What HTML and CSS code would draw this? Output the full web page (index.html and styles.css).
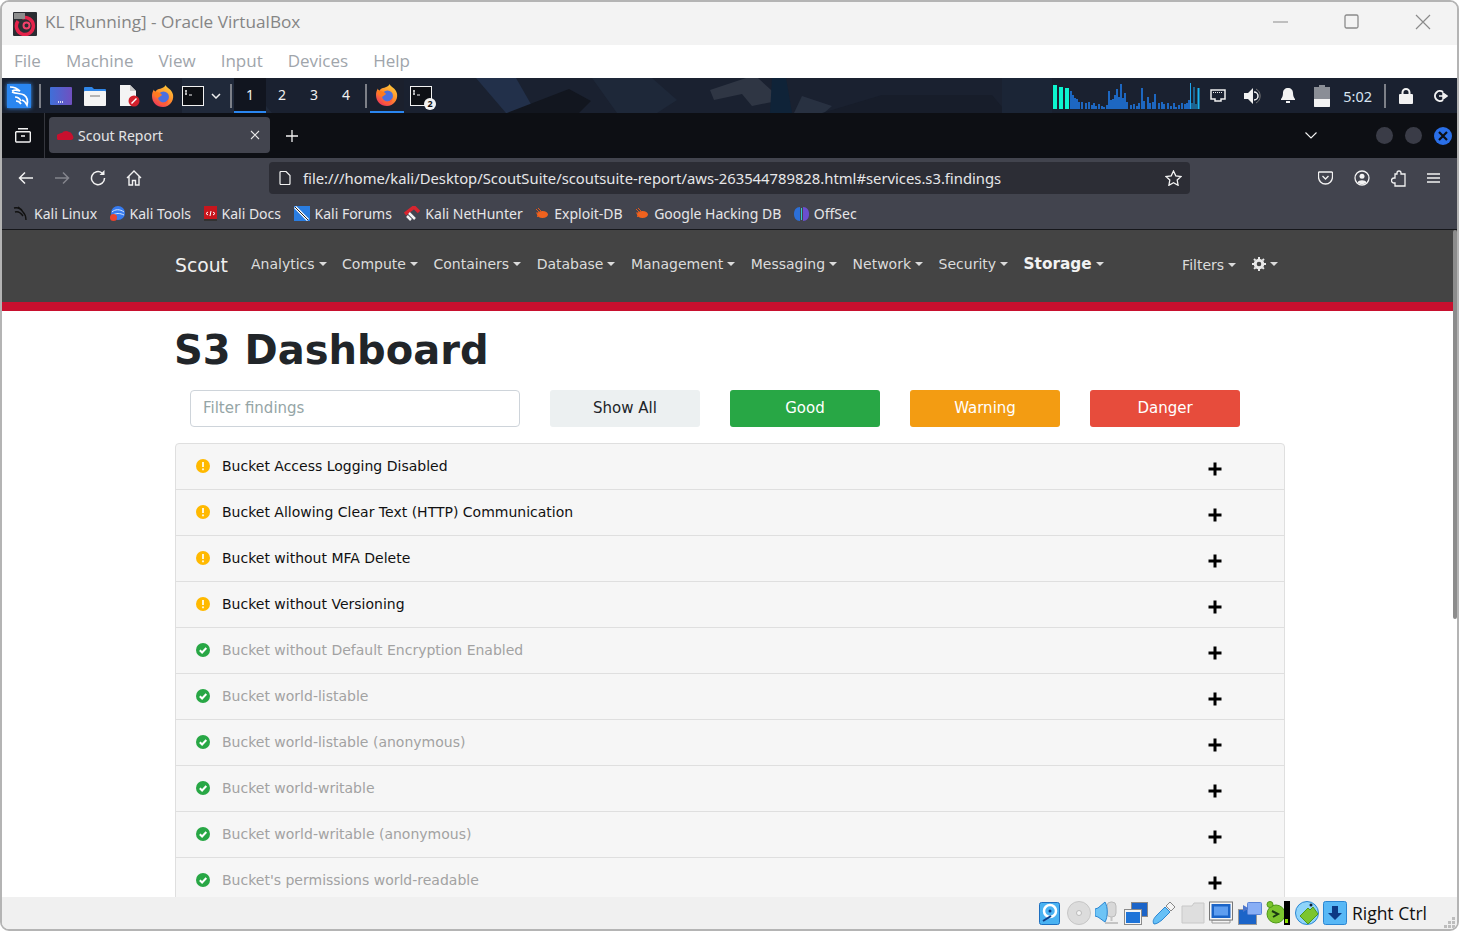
FILE: index.html
```html
<!DOCTYPE html>
<html lang="en">

<head>
    <meta charset="UTF-8">
    <meta name="viewport" content="width=device-width, initial-scale=1.0">
    <title>KL [Running] - Oracle VirtualBox</title>
    <link rel="stylesheet" href="styles.css">
</head>

<body>
    <svg class="defs" width="0" height="0">
        <defs>
            <linearGradient id="foxBody" x1="0.8" y1="0" x2="0.2" y2="1">
                <stop offset="0" stop-color="#ffcf3a"/>
                <stop offset="0.5" stop-color="#ff8a2b"/>
                <stop offset="1" stop-color="#ee2f5c"/>
            </linearGradient>
            <symbol id="firefox" viewBox="0 0 24 24">
                <path d="M15 0c0 3 7 4 8 11 1 7-4 13-11 13S0 19 0 12c0-3 1-5 2-7 0 1 1 2 2 2 1-2 3-3 5-3 3-1 5-2 6-4z" fill="url(#foxBody)"/>
                <circle cx="12.500" cy="13" r="6" fill="#4a6fe0"/>
                <path d="M1 8c4-1 8 0 10 3l-4 3C5 14 2 12 1 8z" fill="#ff7a1f"/>
                <path d="M7 19c4 2 9 0 11-4 0 4-3 7-7 7-2 0-3-1-4-3z" fill="#ff5a36"/>
            </symbol>
            <symbol id="term" viewBox="0 0 22 20">
                <rect x="0.500" y="0.500" width="21" height="19" fill="#0d0f14" stroke="#f2f2f2"/>
                <path d="M4 4v5M3 5h2M3 8h2M7 9h3" stroke="#f2f2f2" fill="none"/>
            </symbol>
            <symbol id="bug" viewBox="0 0 14 12">
                <path d="M1 1l3 3M3 0l3 3M1 5h2M2 9l2-2" stroke="#e0591c" fill="none"/>
                <ellipse cx="7.500" cy="6.500" rx="5.500" ry="3.500" fill="#f0621e"/>
            </symbol>
            <symbol id="warn" viewBox="0 0 14 14">
                <circle cx="7" cy="7" r="7" fill="#ffb900"/>
                <path d="M7 3v5" stroke="#fff6d8" stroke-width="2"/>
                <circle cx="7" cy="10.300" r="1.100" fill="#fff6d8"/>
            </symbol>
            <symbol id="ok" viewBox="0 0 14 14">
                <circle cx="7" cy="7" r="7" fill="#28a745"/>
                <path d="M3.800 7.200l2.300 2.300 4.200-4.500" stroke="#fff" stroke-width="2" fill="none"/>
            </symbol>
            <symbol id="plus" viewBox="0 0 14 14">
                <path d="M7 .5v13M.5 7h13" stroke="#000" stroke-width="3"/>
            </symbol>
        </defs>
    </svg>

    <div class="window">
        <!-- VirtualBox title bar and menu -->
        <div class="titlebar">
            <svg class="vbox-logo" width="24" height="24" viewBox="0 0 24 24">
                <rect width="24" height="24" rx="1" fill="#2b2d33"/>
                <path d="M9 6a8.500 8.500 0 1 1-4 3" stroke="#e5234b" stroke-width="3.500" fill="none"/>
                <circle cx="13.500" cy="13.500" r="3" fill="none" stroke="#f2416a" stroke-width="2"/>
                <rect x="1" y="1" width="11" height="6" fill="#8d8d8d"/>
            </svg>
            <span class="title-text">KL [Running] - Oracle VirtualBox</span>
            <div class="win-btns">
                <svg width="16" height="16" viewBox="0 0 16 16"><path d="M0 8h15" stroke="#8b8b8b"/></svg>
                <svg width="16" height="16" viewBox="0 0 16 16"><rect x="1" y="1" width="13" height="13" rx="1.500" fill="none" stroke="#8b8b8b" stroke-width="1.300"/></svg>
                <svg width="16" height="16" viewBox="0 0 16 16"><path d="M1 1l14 14M15 1L1 15" stroke="#8b8b8b" stroke-width="1.200"/></svg>
            </div>
        </div>
        <div class="menubar">
            <span>File</span><span>Machine</span><span>View</span><span>Input</span><span>Devices</span><span>Help</span>
        </div>

        <!-- Kali panel -->
        <div class="panel">
            <svg class="panel-wall" width="1455" height="35" viewBox="0 0 1455 35">
                <path d="M180 0h60l30 35h-90z" fill="#20293a"/>
                <path d="M474 0h40l20 35h-30z" fill="#22304a"/>
                <path d="M505 35l62-24 22 12-12 12z" fill="#12161f"/>
                <path d="M590 0h60l25 22-20 13h-40z" fill="#1e2839"/>
                <path d="M708 12l36-12h12l24 22-30 6-10-12-28 6z" fill="#2f3644"/>
                <path d="M770 0h14l6 35h-22z" fill="#0f2338"/>
                <path d="M800 18l30 10-8 7h-30z" fill="#283141"/>
                <path d="M820 35l60-18h110l15 18z" fill="#171d2a"/>
                <path d="M1000 0h50v35h-50z" fill="#1b2536"/>
            </svg>
            <div class="panel-left">
                <div class="kali-btn">
                    <svg width="24" height="24" viewBox="0 0 24 24"><path d="M3 3c4 0 7 1 10 4-3-1-6-1-8 0M5 8c4 2 9 1 12 3 3 2 4 6 3 10-1-2-2-4-5-5M8 13c3 0 5 2 6 4M9 17c2 0 4 1 5 3" stroke="#fff" stroke-width="1.700" fill="none"/></svg>
                </div>
                <i class="panel-sep sep-a"></i>
                <svg class="p-desktop" width="22" height="18" viewBox="0 0 22 18"><defs><linearGradient id="deskFill"><stop offset="0" stop-color="#3f6fd8"/><stop offset="1" stop-color="#7050c0"/></linearGradient></defs><rect width="22" height="18" rx="1" fill="url(#deskFill)"/><path d="M8 15h6" stroke="#fff" stroke-dasharray="1 1" stroke-width="1.500"/></svg>
                <svg class="p-folder" width="22" height="20" viewBox="0 0 22 20"><path d="M0 2a1 1 0 0 1 1-1h7l2 2h11a1 1 0 0 1 1 1v3H0z" fill="#2f86e8"/><rect y="5" width="22" height="15" rx="1" fill="#f4f4f4"/><rect x="6" y="9" width="10" height="2" fill="#b5b5b5"/></svg>
                <svg class="p-file" width="21" height="22" viewBox="0 0 21 22"><path d="M1 0h10l6 6v15H1z" fill="#f4f4f4"/><path d="M11 0l6 6h-6z" fill="#c9c9c9"/><circle cx="15" cy="16" r="5.500" fill="#d3202c"/><path d="M12.500 18.500l5-5" stroke="#fff" stroke-width="1.500"/></svg>
                <svg class="p-fox" width="22" height="24"><use href="#firefox"/></svg>
                <svg class="p-term" width="22" height="20"><use href="#term"/></svg>
                <svg class="p-chev" width="10" height="6" viewBox="0 0 10 6"><path d="M1 1l4 4 4-4" stroke="#eee" stroke-width="1.500" fill="none"/></svg>
                <i class="panel-sep sep-b"></i>
                <div class="workspaces">
                    <span class="ws active">1</span><span class="ws">2</span><span class="ws">3</span><span class="ws">4</span>
                </div>
                <i class="panel-sep sep-c"></i>
                <div class="task active"><svg width="22" height="24"><use href="#firefox"/></svg></div>
                <div class="task-term">
                    <svg width="22" height="20"><use href="#term"/></svg>
                    <b class="badge">2</b>
                </div>
            </div>
            <div class="panel-right">
                <svg class="spectrum" width="147" height="26" viewBox="0 0 147 26">
                    <path d="M2 2v24M8 4v22M14 5v21" stroke="#0df5cf" stroke-width="4"/>
                    <path d="M18 26v-18M20 26v-14M22 26v-11M24 26v-10M26 26v-7M29 26v-7M33 26v-6M36 26v-7M39 26v-4M41 26v-6M43 26v-3M46 26v-5M49 26v-3M51 26v-2M54 26v-4M56 26v-18M58 26v-9M60 26v-10M62 26v-14M64 26v-20M66 26v-12M68 26v-25M70 26v-11M72 26v-16M74 26v-7M78 26v-4M81 26v-5M84 26v-3M86 26v-6M89 26v-21M91 26v-8M95 26v-12M97 26v-6M100 26v-7M102 26v-15M106 26v-6M109 26v-7M111 26v-5M115 26v-6M118 26v-3M121 26v-6M123 26v-2M126 26v-4M129 26v-6M132 26v-5" stroke="#1f7ff2" stroke-width="1.500"/>
                    <path d="M134 26v-6M136 26v-9" stroke="#1f7ff2" stroke-width="1.500"/>
                    <path d="M137.500 26v-26M139 26v-6M141 26v-22M143 26v-5" stroke="#1fa6ee"/>
                    <path d="M145.500 26v-21" stroke="#19b4f0" stroke-width="2"/>
                </svg>
                <svg class="p-net" width="16" height="14" viewBox="0 0 16 14"><path d="M1 1h14v9h-4v2H5v-2H1z" fill="none" stroke="#eee" stroke-width="1.500"/><path d="M3 3.500h10" stroke="#eee" stroke-dasharray="1 1"/></svg>
                <svg class="p-vol" width="17" height="16" viewBox="0 0 17 16"><path d="M0 5h4l5-5v16l-5-5H0z" fill="#f2f2f2"/><path d="M10 4a4 4 0 0 1 0 8" stroke="#f2f2f2" stroke-width="1.500" fill="none"/><path d="M12 1a8 8 0 0 1 0 14" stroke="#777" fill="none"/></svg>
                <svg class="p-bell" width="14" height="15" viewBox="0 0 14 15"><path d="M7 0c3 0 5 2 5 5 0 3 1 5 2 6v1H0v-1c1-1 2-3 2-6 0-3 2-5 5-5z" fill="#f2f2f2"/><rect x="5" y="13" width="4" height="2" fill="#f2f2f2"/></svg>
                <svg class="p-batt" width="16" height="22" viewBox="0 0 16 22"><path d="M5 0h6v2h5v20H0V2h5z" fill="#8a8e96"/><path d="M0 14h16v7a1 1 0 0 1-1 1H1a1 1 0 0 1-1-1z" fill="#f2f2f2"/></svg>
                <span class="clock">5:02</span>
                <i class="panel-sep sep-d"></i>
                <svg class="p-lock" width="14" height="16" viewBox="0 0 14 16"><path d="M3.500 7V4.500a3.500 3.500 0 0 1 7 0V7" fill="none" stroke="#f2f2f2" stroke-width="2"/><rect y="6" width="14" height="10" rx="1" fill="#f2f2f2"/></svg>
                <svg class="p-out" width="15" height="14" viewBox="0 0 15 14"><path d="M10 3a5 5 0 1 0 0 8" fill="none" stroke="#f2f2f2" stroke-width="2"/><path d="M6 7h6M10 4l4 3-4 3z" fill="#f2f2f2" stroke="#f2f2f2" stroke-width="1.500"/></svg>
            </div>
        </div>

        <!-- Firefox tabs, toolbar, bookmarks -->
        <div class="tabstrip">
            <div class="tab-list-btn">
                <svg width="16" height="15" viewBox="0 0 16 15"><path d="M3 .7h10M1.500 3.700h13a1 1 0 0 1 .8.8v8.500a1 1 0 0 1-1 1H1.700a1 1 0 0 1-1-1V4.500a1 1 0 0 1 .8-.8zM6 8h4" fill="none" stroke="#f2f2f2" stroke-width="1.400"/></svg>
            </div>
            <div class="tab">
                <svg width="17" height="10" viewBox="0 0 17 10"><path d="M3 10a3 3 0 0 1-1-6c1-1 2-1 3-1 1-2 5-3 7-1 2 0 3 2 4 4 1 2 0 4-2 4z" fill="#c8102e"/></svg>
                <span class="tab-title">Scout Report</span>
                <svg class="tab-x" width="10" height="10" viewBox="0 0 10 10"><path d="M1 1l8 8M9 1L1 9" stroke="#e6e6e6" stroke-width="1.100"/></svg>
            </div>
            <svg class="new-tab" width="12" height="12" viewBox="0 0 12 12"><path d="M6 0v12M0 6h12" stroke="#f2f2f2" stroke-width="1.300"/></svg>
            <div class="strip-right">
                <svg class="all-tabs" width="12" height="7" viewBox="0 0 12 7"><path d="M.5.5L6 6 11.500.5" stroke="#f2f2f2" stroke-width="1.100" fill="none"/></svg>
                <i class="dot"></i>
                <i class="dot"></i>
                <i class="dot close">
                    <svg width="10" height="10" viewBox="0 0 10 10"><path d="M1 1l8 8M9 1L1 9" stroke="#0d0f14" stroke-width="2.200"/></svg>
                </i>
            </div>
        </div>

        <div class="toolbar">
            <div class="nav-btns">
                <svg width="16" height="14" viewBox="0 0 16 14"><path d="M15 7H2M7 1.500L1.500 7 7 12.500" stroke="#f2f2f2" stroke-width="1.500" fill="none"/></svg>
                <svg class="off" width="16" height="14" viewBox="0 0 16 14"><path d="M1 7h13M9 1.500L14.500 7 9 12.500" stroke="#83848c" stroke-width="1.500" fill="none"/></svg>
                <svg width="16" height="16" viewBox="0 0 16 16"><path d="M14.500 8A6.500 6.500 0 1 1 12 3" stroke="#f2f2f2" stroke-width="1.500" fill="none"/><path d="M14.500 0v5h-5z" fill="#f2f2f2"/></svg>
                <svg width="16" height="16" viewBox="0 0 16 16"><path d="M1 8l7-7 7 7M3 6.500V15h3.500v-4.500h3V15H13V6.500" stroke="#f2f2f2" stroke-width="1.400" fill="none"/></svg>
            </div>
            <div class="urlbar">
                <svg width="12" height="14" viewBox="0 0 12 14"><path d="M1 1.500a1 1 0 0 1 1-1h5l4 4v8a1 1 0 0 1-1 1H2a1 1 0 0 1-1-1z" fill="none" stroke="#f2f2f2" stroke-width="1.200"/></svg>
                <span class="url">file:///home/kali/Desktop/ScoutSuite/scoutsuite-report/aws-263544789828.html#services.s3.findings</span>
                <svg class="star" width="17" height="16" viewBox="0 0 17 16"><path d="M8.500 1l2.300 4.800 5.200.7-3.800 3.600.9 5.200-4.600-2.500-4.600 2.500.9-5.200L1 6.500l5.200-.7z" fill="none" stroke="#f2f2f2" stroke-width="1.300"/></svg>
            </div>
            <div class="tool-right">
                <svg width="15" height="14" viewBox="0 0 15 14"><path d="M1.500 1h12a1 1 0 0 1 1 1v4a7 7 0 0 1-14 0V2a1 1 0 0 1 .5-1zM4.500 5l3 3 3-3" fill="none" stroke="#f2f2f2" stroke-width="1.300"/></svg>
                <svg width="16" height="16" viewBox="0 0 16 16"><circle cx="8" cy="8" r="7" fill="none" stroke="#f2f2f2" stroke-width="1.300"/><circle cx="8" cy="6.300" r="2.500" fill="#f2f2f2"/><path d="M3.500 12.500c1-3 8-3 9 0-2 2-7 2-9 0z" fill="#f2f2f2"/></svg>
                <svg width="15" height="17" viewBox="0 0 15 17"><path d="M8 1a2 2 0 0 1 2 2v1h4v12H4v-3H3a2.500 2.500 0 0 1 0-5h1V4h2V3a2 2 0 0 1 2-2z" fill="none" stroke="#f2f2f2" stroke-width="1.300"/></svg>
                <svg width="13" height="10" viewBox="0 0 13 10"><path d="M0 1h13M0 5h13M0 9h13" stroke="#f2f2f2" stroke-width="1.300"/></svg>
            </div>
        </div>

        <div class="bookmarks">
            <a>
                <svg width="16" height="16" viewBox="0 0 16 16"><path d="M1 2c4-1 7 1 9 4 2 2 3 5 3 8M2 6c3-1 6 1 8 4M5 1l4 3" stroke="#111" stroke-width="1.400" fill="none"/></svg>
                Kali Linux
            </a>
            <a>
                <svg width="15" height="15" viewBox="0 0 15 15"><circle cx="8" cy="7" r="7" fill="#367bf0"/><path d="M2 6c3-3 8-3 12 0M3 9c3-2 7-2 11 0" stroke="#d8e8ff" fill="none"/><rect y="8" width="7" height="7" rx="3.500" fill="#e8432e"/></svg>
                Kali Tools
            </a>
            <a>
                <svg width="13" height="15" viewBox="0 0 13 15"><rect width="13" height="14" fill="#c8161d"/><rect y="13" width="13" height="2" fill="#333"/><path d="M4 6l-2 1.500L4 9M9 6l2 1.500L9 9M7 5L6 10" stroke="#fff" fill="none"/></svg>
                Kali Docs
            </a>
            <a>
                <svg width="16" height="15" viewBox="0 0 16 15"><rect width="16" height="15" fill="#2a7de1"/><path d="M1 1l13 13" stroke="#fff" stroke-width="3"/><path d="M1 1l13 13" stroke="#222" stroke-width="1"/></svg>
                Kali Forums
            </a>
            <a>
                <svg width="16" height="15" viewBox="0 0 16 15"><path d="M1 8l9-7 5 5" stroke="#d8252f" stroke-width="3.500" fill="none"/><path d="M3 10l4 4M5 7l6 6" stroke="#f2f2f2" stroke-width="2.500"/></svg>
                Kali NetHunter
            </a>
            <a><svg width="14" height="12"><use href="#bug"/></svg>Exploit-DB</a>
            <a><svg width="14" height="12"><use href="#bug"/></svg>Google Hacking DB</a>
            <a>
                <svg width="15" height="16" viewBox="0 0 15 16"><path d="M6 1C2 1 0 4 0 8s2 7 6 7z" fill="#2c6fd8"/><path d="M9 1c4 0 6 3 6 7s-2 7-6 7z" fill="#6a4fd0"/><path d="M7.500 2v12" stroke="#3cc" stroke-width="1"/></svg>
                OffSec
            </a>
        </div>

        <!-- Scout report page -->
        <div class="page">
            <i class="scrollthumb"></i>
            <nav class="scout-nav">
                <span class="brand">Scout</span>
                <span class="nav-item">Analytics</span>
                <span class="nav-item">Compute</span>
                <span class="nav-item">Containers</span>
                <span class="nav-item">Database</span>
                <span class="nav-item">Management</span>
                <span class="nav-item">Messaging</span>
                <span class="nav-item">Network</span>
                <span class="nav-item">Security</span>
                <span class="nav-item current">Storage</span>
                <span class="nav-item filters">Filters</span>
                <span class="nav-item gear">
                    <svg width="14" height="14" viewBox="0 0 14 14"><circle cx="7" cy="7" r="3.800" fill="none" stroke="#e8e8e8" stroke-width="3"/><path d="M7 0v14M0 7h14M2 2l10 10M12 2L2 12" stroke="#e8e8e8" stroke-width="2" stroke-dasharray="2 10"/></svg>
                </span>
            </nav>
            <div class="content">
                <h1>S3 Dashboard</h1>
                <div class="filter-row">
                    <input class="filter-input" type="text" placeholder="Filter findings">
                    <button class="btn btn-light">Show All</button>
                    <button class="btn btn-good">Good</button>
                    <button class="btn btn-warning">Warning</button>
                    <button class="btn btn-danger">Danger</button>
                </div>
                <ul class="findings">
                    <li><svg width="14" height="14"><use href="#warn"/></svg><span>Bucket Access Logging Disabled</span><svg class="plus" width="14" height="14"><use href="#plus"/></svg></li>
                    <li><svg width="14" height="14"><use href="#warn"/></svg><span>Bucket Allowing Clear Text (HTTP) Communication</span><svg class="plus" width="14" height="14"><use href="#plus"/></svg></li>
                    <li><svg width="14" height="14"><use href="#warn"/></svg><span>Bucket without MFA Delete</span><svg class="plus" width="14" height="14"><use href="#plus"/></svg></li>
                    <li><svg width="14" height="14"><use href="#warn"/></svg><span>Bucket without Versioning</span><svg class="plus" width="14" height="14"><use href="#plus"/></svg></li>
                    <li class="good"><svg width="14" height="14"><use href="#ok"/></svg><span>Bucket without Default Encryption Enabled</span><svg class="plus" width="14" height="14"><use href="#plus"/></svg></li>
                    <li class="good"><svg width="14" height="14"><use href="#ok"/></svg><span>Bucket world-listable</span><svg class="plus" width="14" height="14"><use href="#plus"/></svg></li>
                    <li class="good"><svg width="14" height="14"><use href="#ok"/></svg><span>Bucket world-listable (anonymous)</span><svg class="plus" width="14" height="14"><use href="#plus"/></svg></li>
                    <li class="good"><svg width="14" height="14"><use href="#ok"/></svg><span>Bucket world-writable</span><svg class="plus" width="14" height="14"><use href="#plus"/></svg></li>
                    <li class="good"><svg width="14" height="14"><use href="#ok"/></svg><span>Bucket world-writable (anonymous)</span><svg class="plus" width="14" height="14"><use href="#plus"/></svg></li>
                    <li class="good"><svg width="14" height="14"><use href="#ok"/></svg><span>Bucket's permissions world-readable</span><svg class="plus" width="14" height="14"><use href="#plus"/></svg></li>
                </ul>
            </div>
        </div>

        <!-- VirtualBox status bar -->
        <div class="statusbar">
            <svg class="s-disk" width="21" height="23" viewBox="0 0 21 23"><rect x=".5" y=".5" width="20" height="22" rx="2" fill="#49b2f2" stroke="#1d6fc0"/><circle cx="11" cy="9" r="6" fill="none" stroke="#fff" stroke-width="2.500"/><circle cx="11" cy="9" r="1.500" fill="#0d3a84"/><path d="M4 19l8-5" stroke="#0d3a84" stroke-width="2"/></svg>
            <svg width="24" height="24" viewBox="0 0 24 24"><circle cx="12" cy="12" r="11.500" fill="#dcdcdc" stroke="#c6c6c6"/><circle cx="12" cy="12" r="2.500" fill="#f4f4f4" stroke="#bbb"/></svg>
            <svg width="24" height="24" viewBox="0 0 24 24"><rect x="12" y="1" width="9" height="15" rx="4" fill="#d8d8d8" stroke="#bbb"/><path d="M16.500 16v4M10 22h13" stroke="#c4c4c4" stroke-width="2"/><path d="M0 8l3-1 7-6c3 5 3 15 0 20l-7-5-3-1z" fill="#6dc4f6" stroke="#2b86d2"/></svg>
            <svg width="24" height="24" viewBox="0 0 24 24"><rect x="7.500" y="1.500" width="16" height="14" fill="#1b64c8" stroke="#8a8a8a"/><rect x=".5" y="8.500" width="17" height="15" fill="#f4f4f4" stroke="#8a8a8a"/><rect x="2" y="11" width="14" height="11" fill="#1f74d8"/></svg>
            <svg width="24" height="24" viewBox="0 0 24 24"><path d="M2 23c-2-3 0-6 3-9l8-8 5 5-8 8c-3 2-5 4-8 4z" fill="#66c0f6" stroke="#2b86d2"/><path d="M14 5l4-4 5 5-4 4z" fill="#f4f4f4" stroke="#888"/></svg>
            <svg width="24" height="22" viewBox="0 0 24 22"><path d="M1 4h10l2-3h10v20H1z" fill="#dedede" stroke="#c8c8c8"/></svg>
            <svg width="24" height="24" viewBox="0 0 24 24"><path d="M3 19h18v3H3z" fill="#f4f4f4" stroke="#999"/><rect x=".5" y="1" width="23" height="18" fill="#f6f6f6" stroke="#777"/><rect x="2.500" y="3" width="19" height="14" fill="#1b64c8"/><rect x="5" y="5.500" width="14" height="9" fill="#5f9ef0"/></svg>
            <svg width="24" height="24" viewBox="0 0 24 24"><rect x=".5" y="8.500" width="18" height="15" fill="#1b64c8" stroke="#999"/><rect x="9.500" y="1.500" width="14" height="12" rx="1" fill="#88aef5" stroke="#5b84d8"/><path d="M10 7L5 4v7l5-3z" fill="#4c76cc"/></svg>
            <svg width="24" height="24" viewBox="0 0 24 24"><ellipse cx="10" cy="13" rx="9" ry="9" fill="#7cc52f" stroke="#4e9a18"/><circle cx="4" cy="3.500" r="3" fill="#7cc52f" stroke="#4e9a18"/><path d="M6 10l6 3-5 3" stroke="#1a3a12" stroke-width="2" fill="none"/><rect x="18" width="6" height="24" fill="#000"/><rect x="19" y="18" width="3" height="4" fill="#8be000"/></svg>
            <svg width="24" height="24" viewBox="0 0 24 24"><circle cx="12" cy="12" r="11.500" fill="#8ed4fa" stroke="#2b86d2"/><path d="M5 15l8-8 2 2 3-3 5 7-10 10z" fill="#7cc52f" stroke="#4e9a18"/><circle cx="16" cy="4" r="1.500" fill="#123"/></svg>
            <svg width="24" height="24" viewBox="0 0 24 24"><rect x=".5" y=".5" width="23" height="23" rx="2" fill="#58b8f6" stroke="#2b86d2"/><path d="M9 5h6v7h4l-7 7-7-7h4z" fill="#0d3a84"/></svg>
            <span class="host-key">Right Ctrl</span>
            <svg class="grip" width="12" height="12" viewBox="0 0 12 12"><path d="M8 1h3v3H8zM4 5h3v3H4zM8 5h3v3H8zM0 9h3v3H0zM4 9h3v3H4zM8 9h3v3H8z" fill="#bdbdbd"/></svg>
        </div>
    </div>
</body>

</html>
```

FILE: styles.css
```css
/* General page setup */
* {
    box-sizing: border-box;
}

html,
body {
    margin: 0;
    padding: 0;
    height: 931px;
    overflow: hidden;
    background-color: #ffffff;
}

.defs {
    display: block;
    height: 0;
}

.window {
    height: 931px;
    display: flex;
    flex-direction: column;
    overflow: hidden;
    border: 2px solid #b4b4b4;
    border-radius: 9px;
    font-family: 'Noto Sans', sans-serif;
}

/* VirtualBox title bar and menu */
.titlebar {
    flex: 0 0 43px;
    display: flex;
    align-items: center;
    padding-left: 11px;
    background-color: #f3f3f3;
}

.title-text {
    margin-left: 8px;
    margin-bottom: 5px;
    font-family: 'Open Sans', sans-serif;
    font-size: 17.2px;
    color: #858585;
}

.win-btns {
    margin-left: auto;
    margin-right: 26px;
    margin-bottom: 3px;
    display: flex;
    gap: 55px;
}

.menubar {
    flex: 0 0 33px;
    display: flex;
    align-items: center;
    gap: 25px;
    padding-left: 12px;
    padding-bottom: 2px;
    background-color: #ffffff;
    font-family: 'Open Sans', sans-serif;
    font-size: 17px;
    color: #a0a5ab;
}

/* Kali panel */
.panel {
    flex: 0 0 35px;
    position: relative;
    display: flex;
    justify-content: space-between;
    align-items: center;
    background-color: #1a2130;
    color: #f0f0f0;
}

.panel-wall {
    position: absolute;
    left: 0;
    top: 0;
}

.panel-left,
.panel-right {
    position: relative;
    display: flex;
    align-items: center;
    height: 100%;
}

.kali-btn {
    width: 24px;
    height: 24px;
    margin-left: 5px;
    background-color: #2a86f0;
    box-shadow: 0 0 4px #3a96ff;
}

.panel-sep {
    display: block;
    width: 2px;
    height: 24px;
    background-color: #7d8088;
}

.sep-a { margin-left: 8px; }
.p-desktop { margin-left: 9px; }
.p-folder { margin-left: 12px; }
.p-file { margin-left: 13px; }
.p-fox { margin-left: 12px; }
.p-term { margin-left: 8px; }
.p-chev { margin-left: 7px; }
.sep-b { margin-left: 9px; }
.sep-c { margin-left: 3px; }

.workspaces {
    display: flex;
    margin-left: 2px;
    height: 100%;
}

.ws {
    width: 32px;
    display: flex;
    align-items: center;
    justify-content: center;
    font-size: 14px;
    border-bottom: 2px solid transparent;
}

.ws.active {
    border-bottom-color: #2a86f0;
    background-color: #11151f;
}

.task {
    width: 34px;
    height: 100%;
    margin-left: 3px;
    display: flex;
    align-items: center;
    justify-content: center;
    border-bottom: 2px solid #2a86f0;
    background-color: #1b202d;
}

.task-term {
    position: relative;
    margin-left: 6px;
    height: 20px;
}

.badge {
    position: absolute;
    left: 14px;
    top: 12px;
    width: 12px;
    height: 12px;
    border-radius: 50%;
    background-color: #f2f2f2;
    color: #111;
    font-size: 9px;
    line-height: 12px;
    text-align: center;
}

.spectrum { margin-right: 10px; }
.p-net { margin-left: 0; }
.p-vol { margin-left: 18px; }
.p-bell { margin-left: 20px; }
.p-batt { margin-left: 19px; }

.clock {
    margin-left: 13px;
    font-size: 14.5px;
    color: #d8e4f0;
}

.sep-d { margin-left: 12px; }
.p-lock { margin-left: 13px; }
.p-out { margin-left: 20px; margin-right: 9px; }

/* Firefox tabs */
.tabstrip {
    flex: 0 0 45px;
    display: flex;
    align-items: center;
    background-color: #0d0f14;
    color: #f0f0f0;
}

.tab-list-btn {
    width: 43px;
    height: 100%;
    display: flex;
    align-items: center;
    justify-content: center;
    border-right: 1px solid #34363d;
}

.tab {
    width: 221px;
    height: 36px;
    margin-left: 4px;
    margin-bottom: 1px;
    display: flex;
    align-items: center;
    padding: 0 10px 0 8px;
    border-radius: 4px;
    background-color: #42444e;
}

.tab-title {
    margin-left: 4px;
    font-size: 14px;
    color: #e4e4e6;
}

.tab-x {
    margin-left: auto;
}

.new-tab {
    margin-left: 16px;
}

.strip-right {
    margin-left: auto;
    display: flex;
    align-items: center;
    padding-right: 5px;
}

.all-tabs {
    margin-right: 47px;
}

.dot {
    display: flex;
    align-items: center;
    justify-content: center;
    width: 17px;
    height: 17px;
    margin-left: 12px;
    border-radius: 50%;
    background-color: #3a3c47;
}

.dot.close {
    width: 18px;
    height: 18px;
    background-color: #2a6fe8;
}

/* Firefox toolbar */
.toolbar {
    flex: 0 0 40px;
    display: flex;
    align-items: center;
    background-color: #42444e;
}

.nav-btns {
    width: 267px;
    display: flex;
    align-items: center;
    gap: 20px;
    padding-left: 16px;
}

.urlbar {
    width: 921px;
    height: 32px;
    display: flex;
    align-items: center;
    padding: 0 8px 0 10px;
    border-radius: 4px;
    background-color: #2c2d35;
}

.url {
    margin-left: 12px;
    font-size: 14.8px;
    color: #e6e6e8;
    white-space: nowrap;
}

.star {
    margin-left: auto;
}

.tool-right {
    margin-left: auto;
    display: flex;
    align-items: center;
    gap: 21px;
    padding-right: 17px;
}

.bookmarks {
    flex: 0 0 32px;
    display: flex;
    align-items: center;
    gap: 12.5px;
    padding-left: 11px;
    background-color: #42444e;
    border-bottom: 1px solid #16171b;
    font-size: 14px;
    color: #e6e6e8;
}

.bookmarks a {
    display: flex;
    align-items: center;
    gap: 5px;
    white-space: nowrap;
}

/* Scout report page */
.page {
    flex: 1;
    min-height: 0;
    overflow: hidden;
    position: relative;
    font-family: 'DejaVu Sans', sans-serif;
}

.scrollthumb {
    position: absolute;
    right: 0;
    top: 0;
    width: 4px;
    height: 389px;
    background-color: #8c8c8c;
    border-radius: 2px;
}

.scout-nav {
    height: 81px;
    display: flex;
    align-items: center;
    padding: 0 0 4px 173px;
    background-color: #444444;
    border-bottom: 9px solid #c8102e;
    font-size: 14px;
    color: #dcdcdc;
}

.brand {
    width: 76px;
    margin-top: 2px;
    font-size: 18.75px;
    color: #f0f0f0;
}

.nav-item {
    display: flex;
    align-items: center;
    margin-right: 15.5px;
}

.nav-item::after {
    content: "";
    margin-left: 4px;
    border-top: 4px solid #dcdcdc;
    border-left: 4px solid transparent;
    border-right: 4px solid transparent;
}

.nav-item.current {
    font-size: 15.3px;
    font-weight: bold;
    color: #f2f2f2;
}

.nav-item.filters {
    margin-left: 63px;
    margin-top: 2px;
}

.content {
    width: 1110px;
    margin-left: 173px;
}

h1 {
    margin: 15px 0 0 -1px;
    font-size: 40px;
    line-height: 48px;
    font-weight: bold;
    color: #212529;
}

.filter-row {
    display: flex;
    gap: 30px;
    margin-top: 16px;
    padding-left: 15px;
}

.filter-input {
    width: 330px;
    height: 37px;
    padding: 0 12px 2px;
    border: 1px solid #ced4da;
    border-radius: 4px;
    font-family: 'DejaVu Sans', sans-serif;
    font-size: 15px;
}

.filter-input::placeholder {
    color: #95a5a6;
}

.btn {
    width: 150px;
    height: 37px;
    padding: 0 0 2px;
    border: none;
    border-radius: 3px;
    font-family: 'DejaVu Sans', sans-serif;
    font-size: 15px;
    color: #ffffff;
}

.btn-light { background-color: #ecf0f1; color: #212529; }
.btn-good { background-color: #28a745; }
.btn-warning { background-color: #f39c12; }
.btn-danger { background-color: #e74c3c; }

/* Findings list */
.findings {
    margin: 16px 0 0;
    padding: 0;
    list-style: none;
    border: 1px solid #dfdfdf;
    border-radius: 4px 4px 0 0;
    background-color: #f6f6f6;
    font-size: 14px;
    color: #111111;
}

.findings li {
    height: 46px;
    display: flex;
    align-items: flex-start;
    padding: 15px 0 0 20px;
    border-bottom: 1px solid #dfdfdf;
}

.findings li span {
    margin-left: 12px;
    margin-top: -1px;
}

.findings li.good {
    color: #a2a2a2;
}

.plus {
    margin-left: auto;
    margin-right: 62px;
    margin-top: 3px;
}

/* VirtualBox status bar */
.statusbar {
    flex: 0 0 32px;
    display: flex;
    align-items: center;
    justify-content: flex-end;
    gap: 4.5px;
    position: relative;
    padding-right: 30px;
    background-color: #f0f0f0;
}

.s-disk {
    margin-right: 2px;
}

.host-key {
    font-family: 'Open Sans', sans-serif;
    font-size: 17.5px;
    color: #111111;
}

.grip {
    position: absolute;
    right: 1px;
    bottom: 1px;
}
```
